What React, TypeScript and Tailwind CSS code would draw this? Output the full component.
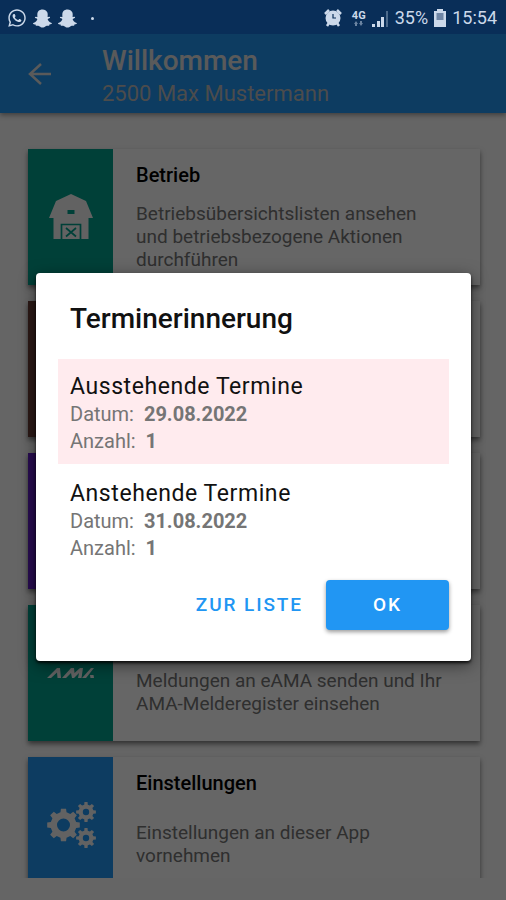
import type { ReactNode } from "react";
import { FaWhatsapp, FaSnapchatGhost } from "react-icons/fa";

function BarnIcon() {
  return (
    <svg viewBox="0 0 44 46" className="h-[46px] w-[44px]" aria-hidden="true">
      <path
        fill="currentColor"
        fillRule="evenodd"
        d="M22 0 37 7 44 24H39.500V45H4.500V24H0L7 7ZM18.500 16V20H25.500V16Z"
      />
      <path d="M12.500 45V30.500H31.500V45M17 34 27 42.500M27 34 17 42.500" stroke="#00a08c" strokeWidth="1.700" fill="none" />
    </svg>
  );
}

function AmaIcon() {
  return (
    <svg viewBox="0 0 48 12" className="h-[12px] w-[48px]" aria-hidden="true">
      <path
        d="M0 11 10 1H13L14 11H10.500L10 5.500 4 11ZM15 11 24 1H27L27.500 6 33 1H36L34.500 11H31L32 6 27 11H25L24 6 19 11ZM35 11 44 1H47L39 11Z"
        fill="currentColor"
      />
      <path d="M43 8H46.500L47 11H43.500Z" fill="currentColor" />
    </svg>
  );
}

function gearPath(cx: number, cy: number, outer: number, inner: number, hole: number) {
  const teeth = 8;
  const step = (Math.PI * 2) / teeth;
  const points: string[] = [];
  const add = (radius: number, angle: number) =>
    points.push(`${(cx + radius * Math.cos(angle)).toFixed(2)} ${(cy + radius * Math.sin(angle)).toFixed(2)}`);
  for (let i = 0; i < teeth; i++) {
    const a = i * step;
    add(inner, a - step * 0.3);
    add(outer, a - step * 0.2);
    add(outer, a + step * 0.2);
    add(inner, a + step * 0.3);
  }
  return `M${points.join("L")}ZM${cx - hole} ${cy}a${hole} ${hole} 0 1 0 ${hole * 2} 0a${hole} ${hole} 0 1 0 ${-hole * 2} 0Z`;
}

function GearsIcon() {
  return (
    <svg viewBox="0 0 50 50" className="h-[50px] w-[50px]" fill="currentColor" fillRule="evenodd" aria-hidden="true">
      <path d={gearPath(17.5, 25, 16.5, 13, 6.5)} />
      <path d={gearPath(40, 12, 10, 7.5, 3.2)} />
      <path d={gearPath(40, 38, 10, 7.5, 3.2)} />
    </svg>
  );
}

function AlarmIcon() {
  return (
    <svg viewBox="0 0 18 18" className="h-[18px] w-[18px]" aria-hidden="true">
      <circle cx="9" cy="9" r="7.500" fill="currentColor" />
      <path d="M1 5 5 1M17 5 13 1M3 17 5 14M15 17 13 14" stroke="currentColor" strokeWidth="2.500" />
      <path d="M9 5V9H12" stroke="#092e58" strokeWidth="1.200" fill="none" />
    </svg>
  );
}

function SignalIcon() {
  return (
    <svg viewBox="0 0 17 17" className="h-[17px] w-[17px]" fill="currentColor" aria-hidden="true">
      <path d="M0 14H3V17H0ZM5 11H8V17H5ZM9 7H12V17H9Z" />
      <path d="M14 1H16V17H14Z" opacity="0.35" />
    </svg>
  );
}

function BatteryIcon() {
  return (
    <svg viewBox="0 0 12 18" className="h-[18px] w-[12px]" aria-hidden="true">
      <path d="M3 0H9V2H12V18H0V2H3Z" fill="currentColor" />
      <path d="M2.500 4H9.500V11H2.500Z" fill="#6f86a5" />
    </svg>
  );
}

function NetworkIcon() {
  return (
    <span className="flex w-[14px] flex-col items-center">
      <span className="text-[11px] leading-[11px] font-bold">4G</span>
      <svg viewBox="0 0 9 5" className="h-[5px] w-[9px] opacity-50" fill="currentColor" aria-hidden="true">
        <path d="M2 0 4 3H0ZM1 3H3V5H1ZM6 0H8V2H6ZM5 2H9L7 5Z" />
      </svg>
    </span>
  );
}

function StatusBar() {
  return (
    <div className="relative z-20 flex h-[34px] items-center justify-between bg-[#092e58] pt-[2px] pr-[9px] pl-[7px] text-[#ccd9ea]">
      <div className="flex items-center gap-[6px]">
        <FaWhatsapp size={20} />
        <FaSnapchatGhost size={19} />
        <FaSnapchatGhost size={19} />
        <span className="ml-[8px] h-[3px] w-[3px] rounded-full bg-current" />
      </div>
      <div className="flex items-center gap-[6px]">
        <AlarmIcon />
        <span className="ml-[4px] flex items-center gap-[6px]">
          <NetworkIcon />
          <SignalIcon />
        </span>
        <span className="text-[18px] leading-[24px]">35%</span>
        <BatteryIcon />
        <span className="text-[18px] leading-[24px]">15:54</span>
      </div>
    </div>
  );
}

type CardProps = { color: string; icon?: ReactNode; title?: string; text?: string };

function MenuCard({ color, icon, title, text }: CardProps) {
  return (
    <a href="#" className="flex h-[136px] shrink-0 bg-white shadow-[0_3px_5px_rgba(0,0,0,0.5)]">
      <span className={`flex w-[85px] shrink-0 items-center justify-center text-[#f5f5f5] ${color}`}>{icon}</span>
      <span className="flex min-w-0 flex-1 flex-col pt-[14px] pr-[32px] pl-[23px]">
        <span className="h-[24px] text-[20px] leading-[24px] font-medium text-black">{title}</span>
        <span className="flex h-[102px] items-center text-[19px] leading-[23px] text-[#757575]">{text}</span>
      </span>
    </a>
  );
}

const cards: CardProps[] = [
  {
    color: "bg-[#00a08c]",
    icon: <BarnIcon />,
    title: "Betrieb",
    text: "Betriebsübersichtslisten ansehen und betriebsbezogene Aktionen durchführen",
  },
  { color: "bg-[#6d4037]" },
  { color: "bg-[#651fc8]" },
  { color: "bg-[#00a08c]", icon: <AmaIcon />, text: "Meldungen an eAMA senden und Ihr AMA-Melderegister einsehen" },
  { color: "bg-[#2196f3]", icon: <GearsIcon />, title: "Einstellungen", text: "Einstellungen an dieser App vornehmen" },
];

type ReminderProps = { title: string; date: string; count: number; highlight?: boolean };

function Reminder({ title, date, count, highlight }: ReminderProps) {
  return (
    <section className={`px-[12px] pt-[14px] pb-[9px] text-[20px] leading-[27px] text-[#757575] ${highlight ? "bg-[#ffebee]" : ""}`}>
      <h3 className="text-[23px] leading-[28px] tracking-wide text-[#111111]">{title}</h3>
      <p>
        Datum: <b className="ml-[5px] font-bold">{date}</b>
      </p>
      <p>
        Anzahl: <b className="ml-[5px] font-bold">{count}</b>
      </p>
    </section>
  );
}

export default function App() {
  return (
    <div className="relative flex h-screen flex-col overflow-hidden bg-[#fcfcfc] font-[Roboto,sans-serif]">
      <StatusBar />
      <header className="relative flex h-[79px] shrink-0 items-center bg-[#2196f3] text-[#e0e0e0] shadow-[0_2px_5px_rgba(0,0,0,0.4)]">
        <button type="button" aria-label="Zurück" className="ml-[28px] flex h-[24px] w-[24px] items-center justify-center">
          <svg viewBox="0 0 24 24" className="h-[24px] w-[24px]" fill="none" stroke="currentColor" strokeWidth="2.500" aria-hidden="true">
            <path d="M23 12H2M13 2 2 12 13 22" />
          </svg>
        </button>
        <div className="ml-[50px] pt-[6px]">
          <h1 className="text-[28px] leading-[34px] font-medium">Willkommen</h1>
          <p className="text-[22px] leading-[32px] text-[#bdbdbd]">2500 Max Mustermann</p>
        </div>
      </header>
      <main className="flex min-h-0 flex-1 flex-col pb-[22px]">
        <div className="flex min-h-0 flex-1 flex-col gap-[16px] overflow-hidden pt-[36px] pr-[26px] pl-[28px]">
          {cards.map((card, i) => (
            <MenuCard key={i} {...card} />
          ))}
        </div>
      </main>

      <div className="absolute inset-0 z-10 flex items-center bg-black/60 pt-[34px] pr-[35px] pl-[36px]">
        <div
          role="dialog"
          aria-modal="true"
          aria-labelledby="dialog-title"
          className="w-full rounded-[4px] bg-white px-[22px] pt-[29px] pb-[31px] shadow-[0_4px_16px_rgba(0,0,0,0.5),0_2px_3px_rgba(0,0,0,0.8)]"
        >
          <h2 id="dialog-title" className="mb-[23px] px-[12px] text-[28px] leading-[34px] font-medium text-[#111111]">
            Terminerinnerung
          </h2>
          <div className="flex flex-col gap-[2px]">
            <Reminder title="Ausstehende Termine" date="29.08.2022" count={1} highlight />
            <Reminder title="Anstehende Termine" date="31.08.2022" count={1} />
          </div>
          <div className="mt-[9px] flex items-center justify-end gap-[23px]">
            <button type="button" className="h-[50px] text-[19px] leading-[24px] font-medium tracking-widest text-[#2196f3]">
              ZUR LISTE
            </button>
            <button
              type="button"
              className="h-[50px] w-[123px] rounded-[4px] bg-[#2196f3] text-[19px] leading-[24px] font-medium tracking-widest text-white shadow-[0_2px_4px_rgba(0,0,0,0.4)]"
            >
              OK
            </button>
          </div>
        </div>
      </div>
    </div>
  );
}
